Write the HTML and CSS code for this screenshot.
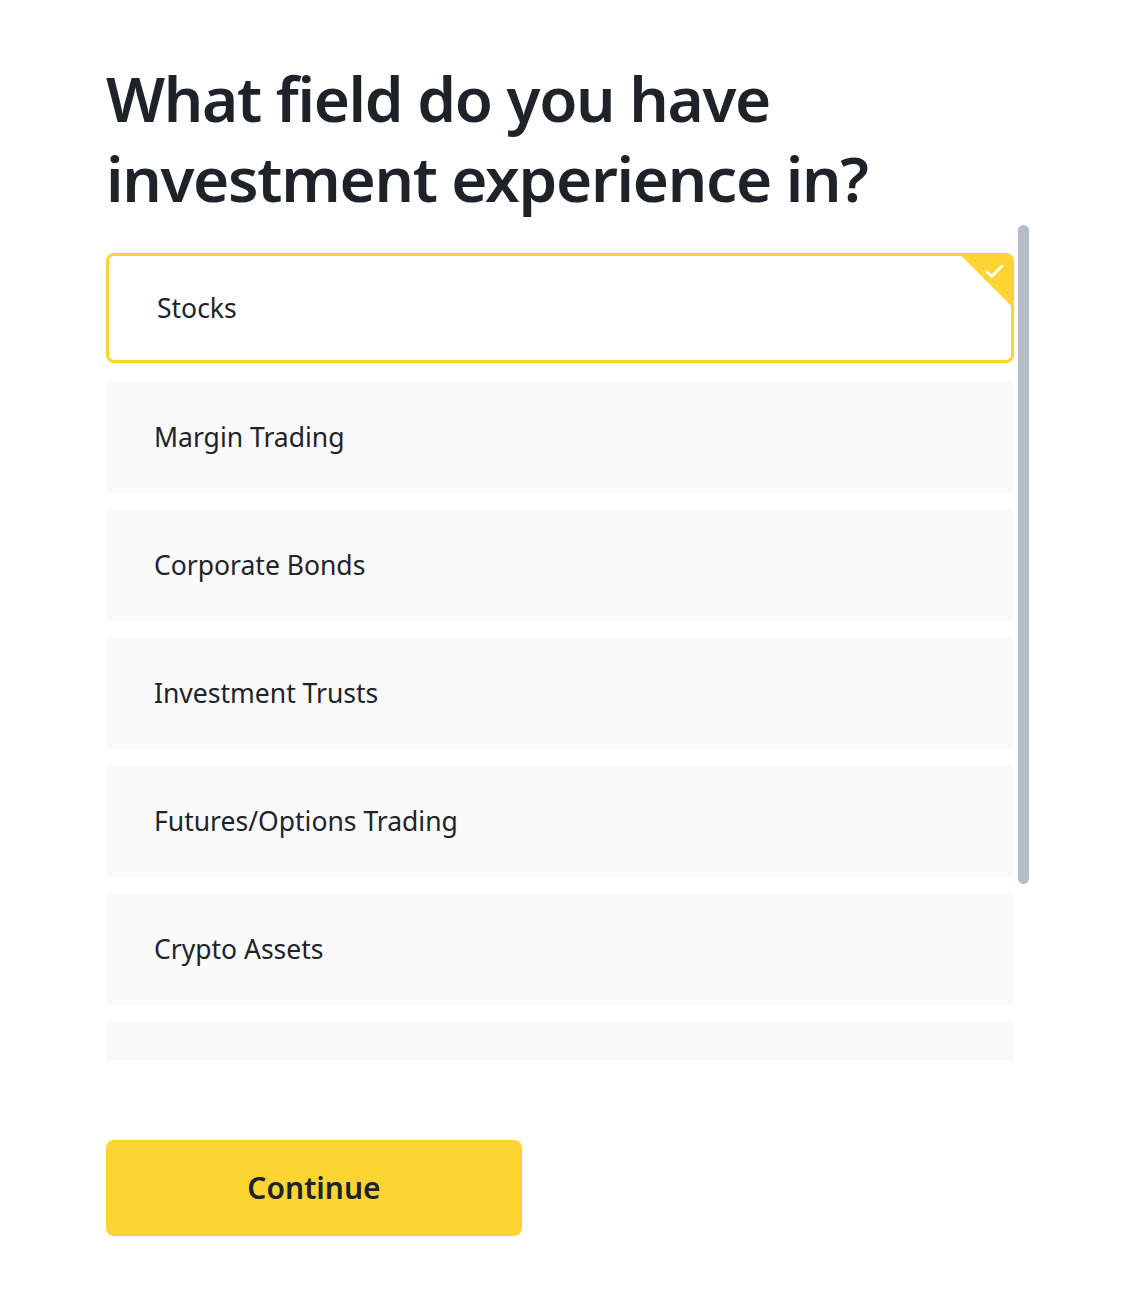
FILE: index.html
```html
<!DOCTYPE html>
<html lang="en">
<head>
<meta charset="utf-8">
<title>Investment experience</title>
<link rel="stylesheet" href="styles.css">
</head>
<body>
<main class="page">
  <h1 class="title">What field do you have investment experience in?</h1>
  <div class="scroller">
    <div class="list">
      <div class="option option--selected">
        <span class="option__label">Stocks</span>
        <span class="option__corner">
          <svg class="option__check" viewBox="0 0 20 16" width="19" height="15" aria-hidden="true">
            <polyline points="2,8.5 7,13 18,2.5" fill="none" stroke="#fff" stroke-width="3" stroke-linecap="round" stroke-linejoin="round"/>
          </svg>
        </span>
      </div>
      <div class="option"><span class="option__label">Margin Trading</span></div>
      <div class="option"><span class="option__label">Corporate Bonds</span></div>
      <div class="option"><span class="option__label">Investment Trusts</span></div>
      <div class="option"><span class="option__label">Futures/Options Trading</span></div>
      <div class="option"><span class="option__label">Crypto Assets</span></div>
      <div class="option"><span class="option__label">Foreign Exchange</span></div>
      <div class="option"><span class="option__label">None</span></div>
    </div>
    <div class="scroller__thumb"></div>
  </div>
  <div class="actions">
    <button class="btn" type="button">Continue</button>
  </div>
</main>
</body>
</html>
```
FILE: styles.css
```css
* { box-sizing: border-box; }
html, body { margin: 0; padding: 0; background: #fff; }
body {
  font-family: "Noto Sans", "Open Sans", "Liberation Sans", sans-serif;
  color: #1e2329;
}
.page {
  padding: 58px 0 0 106px;
  width: 1145px;
}
.title {
  margin: 0;
  font-size: 62px;
  line-height: 80px;
  font-weight: 600;
  width: 820px;
  letter-spacing: -1.3px;
}
.scroller {
  position: relative;
  margin-top: 7px;
  width: 924px;
  height: 835px;
}
.list {
  width: 908px;
  height: 835px;
  overflow: hidden;
  padding-top: 28px;
  display: flex;
  flex-direction: column;
  gap: 16px;
}
.scroller__thumb {
  position: absolute;
  top: 0;
  left: 912px;
  width: 11px;
  height: 659px;
  background: #b7bdc6;
  border-radius: 6px;
}
.option {
  position: relative;
  flex: 0 0 112px;
  height: 112px;
  background: #fafafa;
  border-radius: 6px;
  display: flex;
  align-items: center;
  padding-left: 48px;
}
.option--selected {
  flex-basis: 110px;
  height: 110px;
  background: #fff;
  border: 3px solid #fcd535;
  border-radius: 8px;
  padding-left: 48px;
  overflow: hidden;
  margin-bottom: 2px;
}
.option__label {
  font-size: 26.5px;
  line-height: 36px;
  font-weight: 400;
  color: #1e2329;
}
.option__corner {
  position: absolute;
  top: 0;
  right: 0;
  width: 50px;
  height: 50px;
  background: linear-gradient(225deg, #fcd535 50%, transparent 50%);
}
.option__check {
  position: absolute;
  top: 8px;
  right: 7px;
}
.actions {
  margin-top: 80px;
}
.btn {
  display: block;
  width: 416px;
  height: 96px;
  border: 0;
  border-radius: 8px;
  background: #fcd535;
  color: #1e2329;
  font-family: inherit;
  font-size: 30px;
  line-height: 40px;
  font-weight: 600;
  padding: 0;
  cursor: pointer;
}
```
